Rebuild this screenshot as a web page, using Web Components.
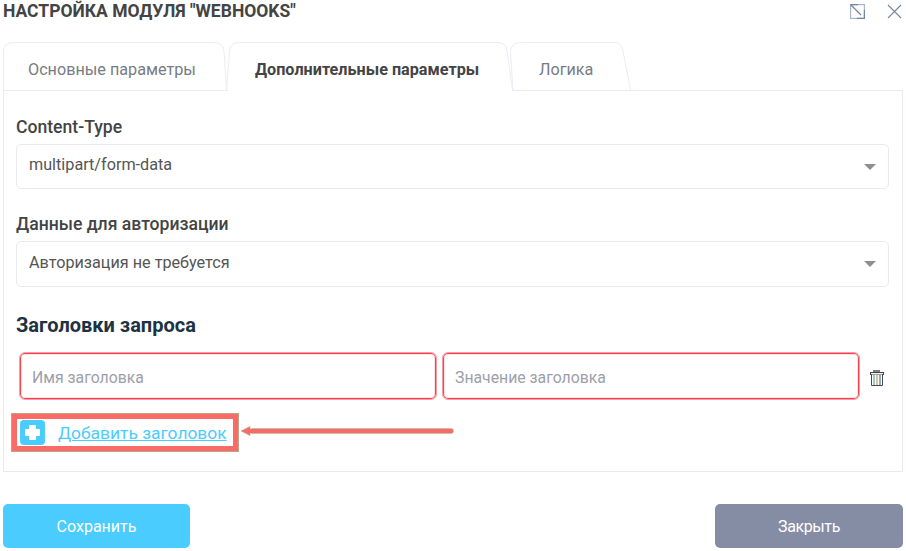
<!DOCTYPE html>
<html lang="ru">
<head>
<meta charset="utf-8">
<title>Webhooks</title>
<style>
  html, body { margin: 0; padding: 0; background: #fff; }
  body { font-family: Roboto, "Liberation Sans", sans-serif; width: 906px; height: 551px; overflow: hidden; }
</style>
</head>
<body>
<module-dialog>
  <span slot="title">Настройка модуля "Webhooks"</span>
  <tab-strip slot="tabs">
    <tab-item width="224" pad="25" bl="0.5" tl="0.5" tr="3" curve="14">Основные параметры</tab-item>
    <tab-item width="287" pad="29" bl="0.5" tl="3.5" tr="6" curve="15" active style="margin-left:-1px">Дополнительные параметры</tab-item>
    <tab-item width="121" pad="29" bl="3" tl="0.5" tr="8" curve="16" style="margin-left:-3px">Логика</tab-item>
  </tab-strip>
  <select-field label="Content-Type" value="multipart/form-data" height="45"></select-field>
  <select-field label="Данные для авторизации" value="Авторизация не требуется" height="46" style="margin-top:25px"></select-field>
  <headers-block></headers-block>
  <dialog-button slot="footer" kind="save">Сохранить</dialog-button>
  <dialog-button slot="footer" kind="close">Закрыть</dialog-button>
</module-dialog>

<script>
class ModuleDialog extends HTMLElement {
    constructor() {
        super();
        this.attachShadow({mode: "open"}).innerHTML = `
        <style>
            :host { display: block; padding: 0 3px; color: #444; }
            header { display: flex; align-items: center; height: 23px; }
            h1 { margin: 0; flex: 1; font: 700 17.5px/23px Roboto, sans-serif; text-transform: uppercase; color: #444; }
            .ctl { display: flex; gap: 22px; margin-right: 1px; }
            svg { display: block; }
            .tabs { margin-top: 19px; height: 48px; }
            .panel { border: 1px solid #e9e9f1; height: 382px; padding: 26px 12px 0; box-sizing: border-box; }
            footer { display: flex; justify-content: space-between; margin-top: 32px; }
        </style>
        <header>
            <h1><slot name="title"></slot></h1>
            <div class="ctl">
                <svg width="15" height="15" viewBox="0 0 15 15" fill="none" stroke-width="1.2">
                    <rect x="0.6" y="0.6" width="13.800" height="13.800" stroke="#a9b4c6"/>
                    <path d="M0.6 0.6H8M14.400 6V14.400H7" stroke="#6f85a8"/>
                    <path d="M1 1L11 11" stroke="#6f85a8"/>
                </svg>
                <svg width="15" height="15" viewBox="0 0 15 15" fill="none" stroke="#7a889f" stroke-width="1.2">
                    <path d="M1 1L14 14M14 1L1 14"/>
                </svg>
            </div>
        </header>
        <div class="tabs"><slot name="tabs"></slot></div>
        <div class="panel"><slot></slot></div>
        <footer><slot name="footer"></slot></footer>
        `;
    }
}

class TabStrip extends HTMLElement {
    constructor() {
        super();
        this.attachShadow({mode: "open"}).innerHTML = `
        <style>
            :host { display: flex; height: 49px; position: relative; z-index: 1; }
        </style>
        <slot></slot>
        `;
    }
}

class TabItem extends HTMLElement {
    constructor() {
        super();
        const w = Number(this.getAttribute("width"));
        const active = this.hasAttribute("active");
        const bl = Number(this.getAttribute("bl"));
        const tl = Number(this.getAttribute("tl"));
        const tr = Number(this.getAttribute("tr"));
        const curve = Number(this.getAttribute("curve"));
        // left and right sides lean a little, like the tabs of the original form
        const shape = `M${bl} 48 L${tl} 10 Q${tl} 0.5 ${tl + 10} 0.5 H${w - curve} Q${w - tr - 1} 0.5 ${w - tr} 9 L${w - 0.5} 48`;
        this.attachShadow({mode: "open"}).innerHTML = `
        <style>
            :host { display: block; position: relative; width: ${w}px; height: 49px; flex: none; }
            svg { position: absolute; left: 0; top: 0; }
            span { position: relative; display: block; padding-left: ${this.getAttribute("pad")}px; font: ${active ? 700 : 400} 16.2px/55px Roboto, sans-serif; color: ${active ? "#444" : "#777c83"}; white-space: nowrap; }
        </style>
        <svg width="${w}" height="49" fill="${active ? "#fff" : "none"}" stroke="#ececf3">
            <path d="${shape}"/>
            ${active ? `<rect x="2" y="47" width="${w - 3}" height="2" fill="#fff" stroke="none"/>` : ""}
        </svg>
        <span><slot></slot></span>
        `;
    }
}

class SelectField extends HTMLElement {
    constructor() {
        super();
        const h = this.getAttribute("height");
        this.attachShadow({mode: "open"}).innerHTML = `
        <style>
            :host { display: block; }
            label { display: block; font: 500 17.6px/21px Roboto, sans-serif; color: #444; margin-bottom: 6px; }
            .box { display: flex; align-items: center; justify-content: space-between; height: ${h}px; margin-right: 1px; box-sizing: border-box; border: 1px solid #e9e9f1; border-radius: 5px; padding: 0 12px; font: 400 16.2px Roboto, sans-serif; color: #555; }
            span { margin-bottom: 4px; }
            i { width: 0; height: 0; border: 6px solid transparent; border-top: 6px solid #8f8f8f; border-bottom: 0; }
        </style>
        <label>${this.getAttribute("label")}</label>
        <div class="box"><span>${this.getAttribute("value")}</span><i></i></div>
        `;
    }
}

class HeadersBlock extends HTMLElement {
    constructor() {
        super();
        this.attachShadow({mode: "open"}).innerHTML = `
        <style>
            :host { display: block; margin-top: 26px; }
            h2 { margin: 0; font: 700 20px/24px Roboto, sans-serif; color: #1d3341; }
            .row { display: flex; align-items: center; gap: 5px; margin: 15px 0 0 3px; }
            .inp { width: 418px; height: 48px; box-sizing: border-box; border: 1px solid #fa9aa0; border-radius: 6px; padding: 2px 12px 0; display: flex; align-items: center; font: 400 15.8px Roboto, sans-serif; color: #9c9fa9; box-shadow: inset 0 0 0 1px #f4444e, inset 0 0 0 2px #fde3e5; }
            .trash { margin: 3px 0 0 5px; display: block; }
            .add { display: flex; align-items: center; margin-top: 13px; }
            .hl { width: 228px; height: 39px; margin-left: -5px; box-sizing: border-box; border: 6px solid #f96b67; outline: 1px solid #c0a48a; outline-offset: -1px; display: flex; align-items: center; padding-left: 3px; flex: none; }
            .plus { width: 25px; height: 25px; border-radius: 4px; background: #4accff; position: relative; flex: none; }
            .plus::before { content: ""; position: absolute; left: 9px; top: 5px; width: 7px; height: 15px; background: #fff; border-radius: 1px; }
            .plus::after { content: ""; position: absolute; left: 5px; top: 9px; width: 15px; height: 7px; background: #fff; border-radius: 1px; }
            a { margin-left: 13px; font: 400 17.4px Roboto, sans-serif; color: #4accff; text-decoration: underline; white-space: nowrap; }
            .arrow { display: block; margin: -3px 0 0 1px; }
        </style>
        <h2>Заголовки запроса</h2>
        <div class="row">
            <div class="inp">Имя заголовка</div>
            <div class="inp">Значение заголовка</div>
            <svg class="trash" width="14" height="16" viewBox="0 0 14 16">
                <rect x="3" y="0" width="7" height="2" fill="#808080"/>
                <rect x="0.500" y="2.500" width="13" height="2" fill="#f2f2f2" stroke="#444"/>
                <path d="M1.500 4.500V15.500H12.500V4.500" fill="#fff" stroke="#3f4a55"/>
                <path d="M4 5V15" stroke="#76b8e0" stroke-width="1.500"/>
                <path d="M7 5V15" stroke="#d8b070" stroke-width="1.500"/>
                <path d="M10 5V15" stroke="#7a8aa8" stroke-width="1.500"/>
            </svg>
        </div>
        <div class="add">
            <div class="hl"><span class="plus"></span><a>Добавить заголовок</a></div>
            <svg class="arrow" width="214" height="12" viewBox="0 0 214 12">
                <path d="M12 6H211" stroke="#c0a48a" stroke-width="5.500" stroke-linecap="round"/>
                <path d="M1 6L10 1.500V10.500Z" fill="#f96b67" stroke="#c0a48a" stroke-width="0.700"/>
                <path d="M10 6H211" stroke="#f96b67" stroke-width="4" stroke-linecap="round"/>
            </svg>
        </div>
        `;
    }
}

class DialogButton extends HTMLElement {
    constructor() {
        super();
        const save = this.getAttribute("kind") === "save";
        this.attachShadow({mode: "open"}).innerHTML = `
        <style>
            :host { display: flex; align-items: center; justify-content: center; height: 44px; width: ${save ? 187 : 188}px; border-radius: 5px; background: ${save ? "#4accff" : "#858da5"}; color: #fff; font: 400 16px Roboto, sans-serif; letter-spacing: ${save ? 0 : -0.4}px; }
        </style>
        <slot></slot>
        `;
    }
}

customElements.define("module-dialog", ModuleDialog);
customElements.define("tab-strip", TabStrip);
customElements.define("tab-item", TabItem);
customElements.define("select-field", SelectField);
customElements.define("headers-block", HeadersBlock);
customElements.define("dialog-button", DialogButton);
</script>
</body>
</html>
